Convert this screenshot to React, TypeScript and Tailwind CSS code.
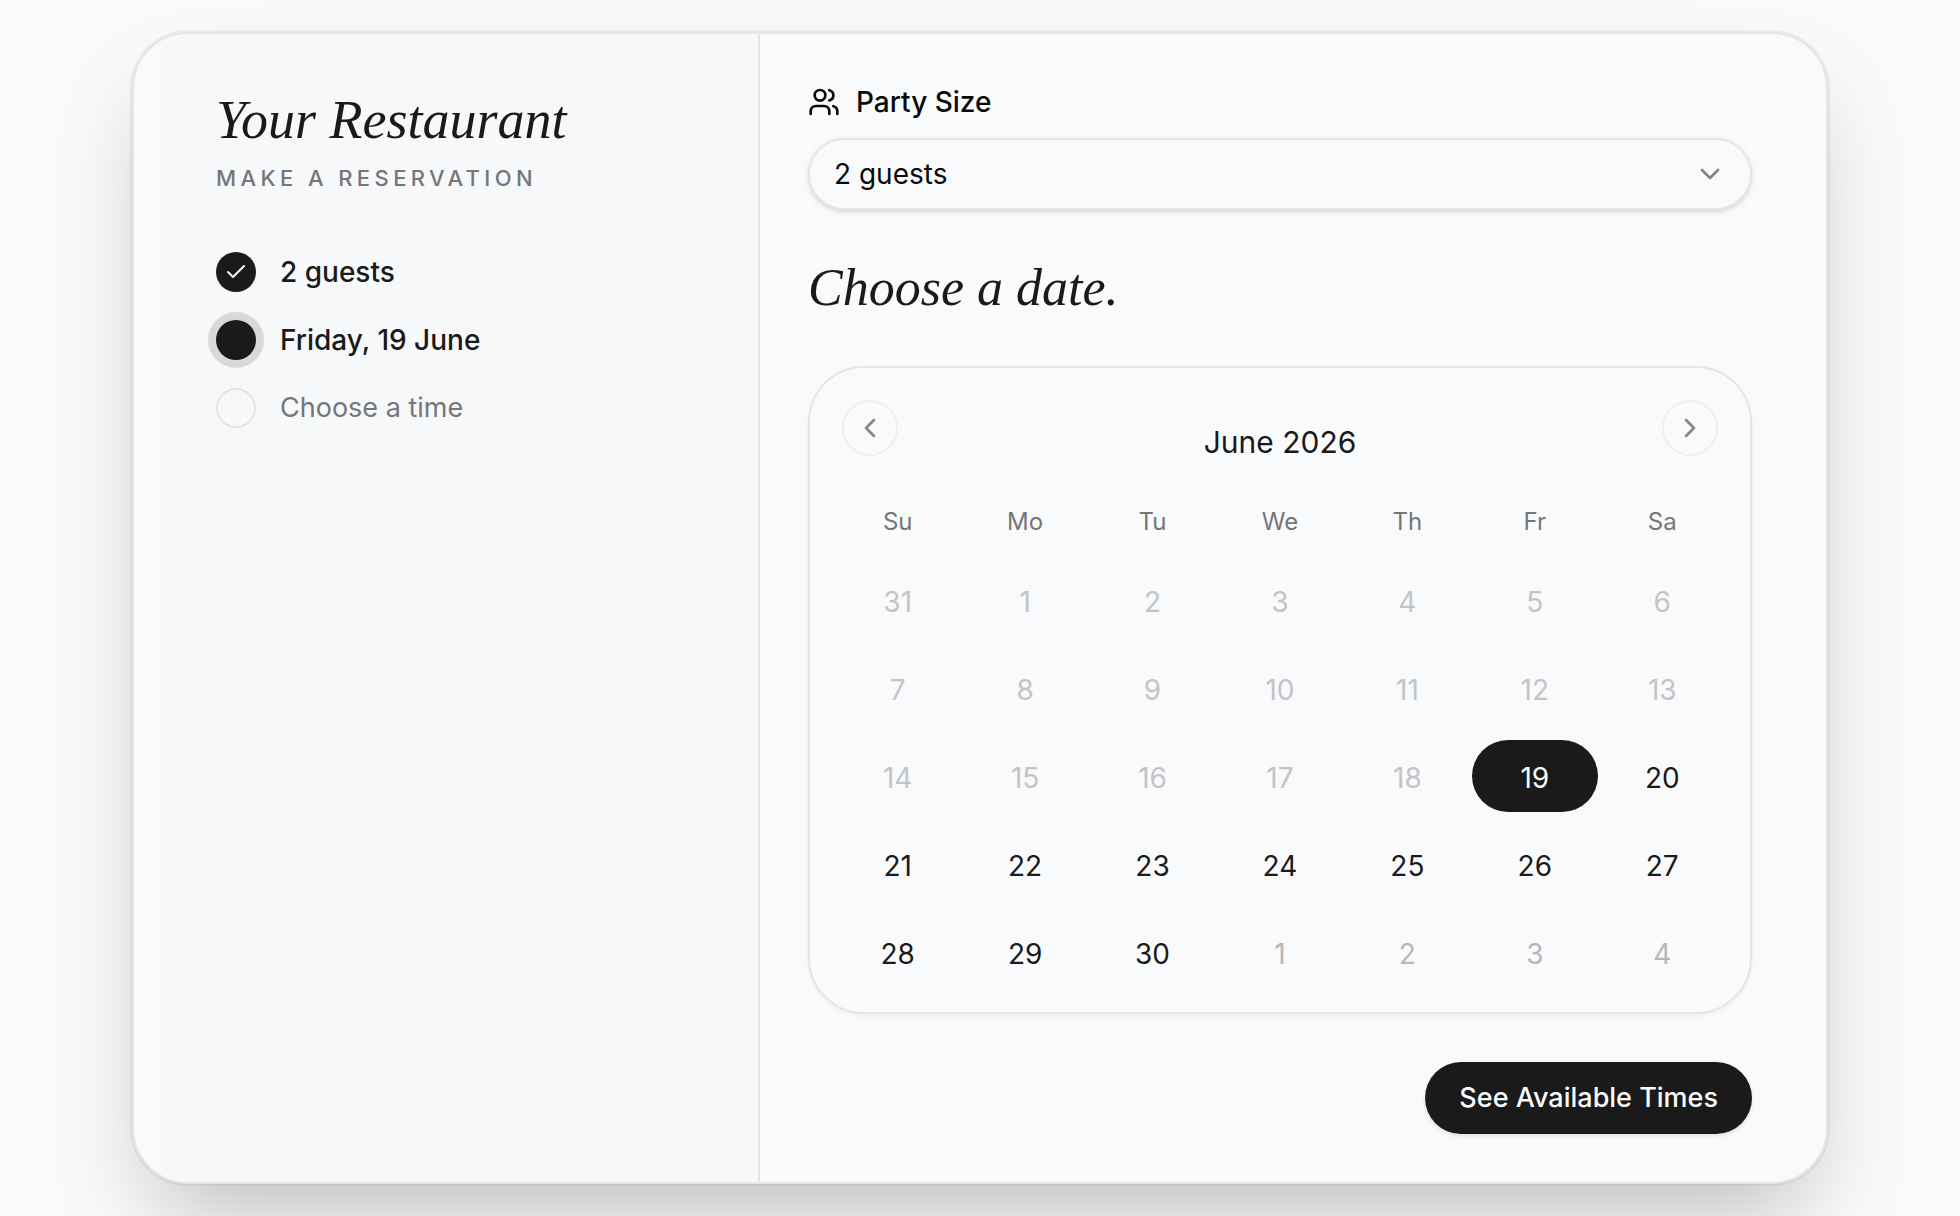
import { Check, ChevronDown, ChevronLeft, ChevronRight, Users } from "lucide-react";

type Day = { n: number; state: "past" | "open" | "selected" | "outside" };

const weekdays = ["Su", "Mo", "Tu", "We", "Th", "Fr", "Sa"];

const days: Day[] = [
  { n: 31, state: "past" },
  ...Array.from({ length: 30 }, (_, i): Day => {
    const n = i + 1;
    return { n, state: n < 19 ? "past" : n === 19 ? "selected" : "open" };
  }),
  ...[1, 2, 3, 4].map((n): Day => ({ n, state: "outside" })),
];

const weeks = [0, 1, 2, 3, 4].map((w) => days.slice(w * 7, w * 7 + 7));

const dayStyle: Record<Day["state"], string> = {
  past: "text-[#c3c4c6]",
  open: "text-[#1a1a1a]",
  selected: "bg-[#1a1a1a] text-[#f9fafc]",
  outside: "text-[#b6b7b8]",
};

function Sidebar() {
  return (
    <aside className="w-[600px] shrink-0 border-r-2 border-[#e4e5e7] bg-[#f7f8fa] pt-[54px] pl-14">
      <h1 className="font-['Liberation_Serif',serif] text-[54px] leading-16 text-[#1a1a1a] italic">
        Your Restaurant
      </h1>
      <p className="mt-2 text-[22px] leading-9 font-medium tracking-[0.2em] text-[#757677] uppercase">
        Make a reservation
      </p>
      <ol className="mt-14 flex flex-col gap-7 text-[28px] leading-10 text-[#1a1a1a]">
        <li className="flex items-center gap-6 font-medium">
          <span className="flex size-10 items-center justify-center rounded-full bg-[#1a1a1a] text-[#f9fafc]">
            <Check className="size-6" />
          </span>
          2 guests
        </li>
        <li className="flex items-center gap-6 font-medium">
          <span className="size-10 rounded-full bg-[#1a1a1a] ring-8 ring-[#d7d8da]" />
          Friday, 19 June
        </li>
        <li className="flex items-center gap-6 text-[27px] text-[#757677]">
          <span className="size-10 rounded-full border-2 border-[#e4e5e7]" />
          Choose a time
        </li>
      </ol>
    </aside>
  );
}

function Calendar() {
  return (
    <section className="mt-12 rounded-[56px] border-2 border-[#e4e5e7] px-6 pt-8 pb-4 shadow-[0_2px_4px_rgba(0,0,0,0.05)]">
      <div className="flex items-start justify-between px-2">
        <button type="button" aria-label="Previous month" className="flex size-14 items-center justify-center rounded-full border-2 border-[#eeeff1] text-[#85868a]">
          <ChevronLeft className="size-8" />
        </button>
        <h3 className="pt-[22px] text-[30px] leading-10 text-[#1a1a1a]">June 2026</h3>
        <button type="button" aria-label="Next month" className="flex size-14 items-center justify-center rounded-full border-2 border-[#eeeff1] text-[#85868a]">
          <ChevronRight className="size-8" />
        </button>
      </div>
      <table className="mt-10 w-full table-fixed border-collapse">
        <thead>
          <tr>
            {weekdays.map((d) => (
              <th key={d} scope="col" className="pb-[14px] text-2xl leading-10 font-normal text-[#757677]">
                {d}
              </th>
            ))}
          </tr>
        </thead>
        <tbody>
          {weeks.map((week, i) => (
            <tr key={i}>
              {week.map((day, j) => (
                <td key={j} className="px-px py-2">
                  <button type="button" className={`block h-18 w-full rounded-full pt-1 text-[28px] leading-10 ${dayStyle[day.state]}`}>
                    {day.n}
                  </button>
                </td>
              ))}
            </tr>
          ))}
        </tbody>
      </table>
    </section>
  );
}

export default function App() {
  return (
    <div className="min-h-screen bg-[#f9fafc] p-8 font-['Inter',sans-serif]">
      <main className="mx-auto flex w-full max-w-[1696px] overflow-hidden rounded-[56px] border-2 border-[#e4e5e7] bg-[#f9fafc] px-[26px] shadow-[0_0_0_2px_rgba(0,0,0,0.05),0_50px_100px_-24px_rgba(0,0,0,0.25)]">
        <Sidebar />
        <form className="min-w-0 flex-1 p-12">
          <label htmlFor="party" className="flex items-center gap-4 text-[28px] leading-10 font-medium text-[#0a0a0a]">
            <Users className="size-8" />
            Party Size
          </label>
          <div className="relative mt-4">
            <select id="party" defaultValue="2" className="block h-18 w-full appearance-none rounded-full border-2 border-[#e4e5e7] bg-[#f9fafc] px-6 text-[28px] leading-10 text-[#0a0a0a] shadow-[0_2px_6px_rgba(0,0,0,0.1),0_2px_4px_-2px_rgba(0,0,0,0.1)]">
              <option value="1">1 guest</option>
              <option value="2">2 guests</option>
              <option value="3">3 guests</option>
              <option value="4">4 guests</option>
            </select>
            <ChevronDown className="pointer-events-none absolute top-5 right-[26px] size-8 text-[#818284]" />
          </div>
          <h2 className="mt-12 font-['Liberation_Serif',serif] text-[52px] leading-15 text-[#1a1a1a] italic">
            Choose a date.
          </h2>
          <Calendar />
          <div className="mt-12 flex justify-end">
            <button type="button" className="h-18 rounded-full bg-[#1a1a1a] px-[34px] text-[27px] leading-10 font-medium text-[#f9fafc] shadow-[0_2px_4px_rgba(0,0,0,0.1)]">
              See Available Times
            </button>
          </div>
        </form>
      </main>
    </div>
  );
}
